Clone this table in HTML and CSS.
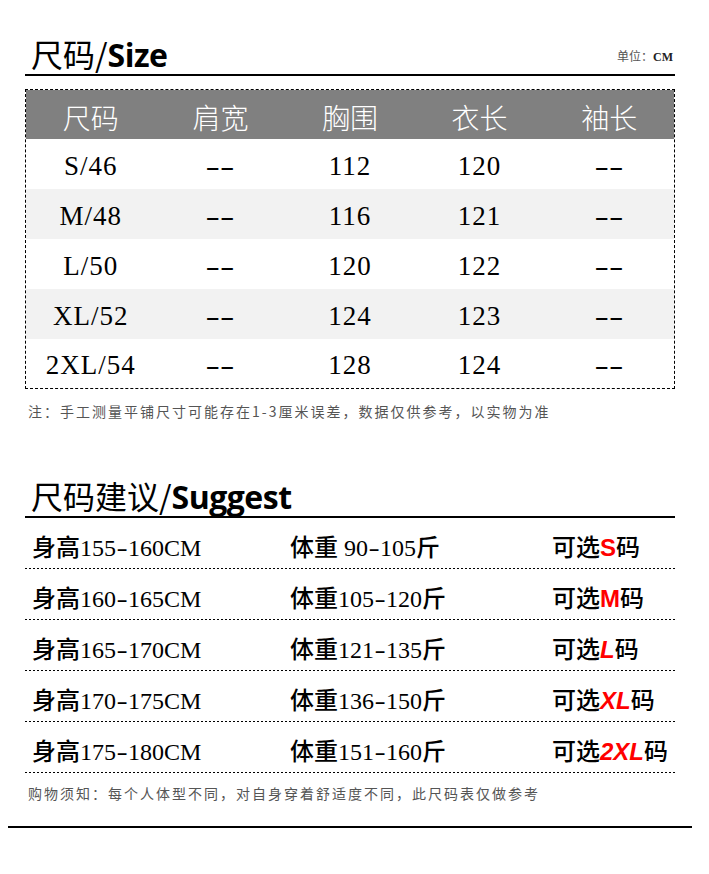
FILE: index.html
```html
<!DOCTYPE html>
<html lang="zh-CN">
<head>
<meta charset="utf-8">
<title>尺码</title>
<link rel="stylesheet" href="styles.css">
</head>
<body>
<div class="page">
  <section class="block">
    <div class="title-row">
      <h1 class="title"><span class="cn">尺码/</span><span class="en">Size</span></h1>
      <div class="unit">单位：<b>CM</b></div>
    </div>
    <div class="size-table">
      <div class="tr head">
        <div>尺码</div><div>肩宽</div><div>胸围</div><div>衣长</div><div>袖长</div>
      </div>
      <div class="tr">
        <div>S/46</div><div><span class="dash">--</span></div><div>112</div><div>120</div><div><span class="dash">--</span></div>
      </div>
      <div class="tr alt">
        <div>M/48</div><div><span class="dash">--</span></div><div>116</div><div>121</div><div><span class="dash">--</span></div>
      </div>
      <div class="tr">
        <div>L/50</div><div><span class="dash">--</span></div><div>120</div><div>122</div><div><span class="dash">--</span></div>
      </div>
      <div class="tr alt">
        <div>XL/52</div><div><span class="dash">--</span></div><div>124</div><div>123</div><div><span class="dash">--</span></div>
      </div>
      <div class="tr last">
        <div>2XL/54</div><div><span class="dash">--</span></div><div>128</div><div>124</div><div><span class="dash">--</span></div>
      </div>
    </div>
    <p class="note note-top">注：手工测量平铺尺寸可能存在1-3厘米误差，数据仅供参考，以实物为准</p>
  </section>

  <section class="block suggest">
    <div class="title-row">
      <h1 class="title"><span class="cn">尺码建议/</span><span class="en">Suggest</span></h1>
    </div>
    <div class="srow"><div>身高155<span class="hy">-</span>160CM</div><div>体重 90<span class="hy">-</span>105斤</div><div>可选<span class="sz">S</span>码</div></div>
    <div class="srow"><div>身高160<span class="hy">-</span>165CM</div><div>体重105<span class="hy">-</span>120斤</div><div>可选<span class="sz">M</span>码</div></div>
    <div class="srow"><div>身高165<span class="hy">-</span>170CM</div><div>体重121<span class="hy">-</span>135斤</div><div>可选<span class="sz it">L</span>码</div></div>
    <div class="srow"><div>身高170<span class="hy">-</span>175CM</div><div>体重136<span class="hy">-</span>150斤</div><div>可选<span class="sz it">XL</span>码</div></div>
    <div class="srow"><div>身高175<span class="hy">-</span>180CM</div><div>体重151<span class="hy">-</span>160斤</div><div>可选<span class="sz it">2XL</span>码</div></div>
    <p class="note note-bottom">购物须知：每个人体型不同，对自身穿着舒适度不同，此尺码表仅做参考</p>
  </section>
  <div class="bottom-rule"></div>
</div>
</body>
</html>
```

FILE: styles.css
```css
* { box-sizing: border-box; }
html, body { margin: 0; padding: 0; background: #fff; }
body { width: 709px; height: 874px; overflow: hidden; font-family: "Noto Sans CJK SC", sans-serif; color: #000; }

.page { padding-top: 36px; }

.block { margin: 0 34px 0 25px; width: 650px; }

.title-row {
  display: flex;
  justify-content: space-between;
  align-items: flex-end;
  border-bottom: 2px solid #000;
  height: 40px;
}
.title {
  margin: 0;
  font-size: 32px;
  line-height: 38px;
  font-weight: 400;
  padding-left: 6px;
  white-space: nowrap;
}
.title .cn { font-family: "Noto Sans CJK SC", sans-serif; font-weight: 400; }
.title .en { font-family: "Open Sans", "Noto Sans", sans-serif; font-weight: 700; letter-spacing: -0.5px; }

.unit {
  font-size: 12px;
  line-height: 14px;
  color: #555;
  margin-bottom: 10px;
  margin-right: 2px;
  font-family: "Noto Sans CJK SC", sans-serif;
}
.unit b { font-family: "Liberation Serif", serif; font-weight: 700; color: #222; }

.size-table {
  margin-top: 13px;
  border: 1px dashed #000;
}
.tr {
  display: grid;
  grid-template-columns: repeat(5, 1fr);
  height: 50px;
  align-items: center;
  text-align: center;
  font-family: "Liberation Serif", serif;
  font-size: 27px;
  letter-spacing: 1px;
  padding-top: 4px;
}
.tr.head {
  height: 49px;
  background: #808080;
  color: #fff;
  font-family: "Noto Sans CJK SC", sans-serif;
  font-weight: 300;
  font-size: 28px;
  letter-spacing: 0;
  padding-top: 5px;
}
.tr.alt { background: #f2f2f2; }
.tr.last { height: 49px; }
.dash {
  display: inline-block;
  letter-spacing: 0;
  transform: scaleX(1.6);
}

.note {
  margin: 0;
  font-size: 14px;
  line-height: 20px;
  letter-spacing: 2px;
  color: #555;
  padding-left: 3px;
  font-family: "Noto Sans CJK SC", sans-serif;
}
.note-top { margin-top: 12px; }

.suggest { margin-top: 57px; }

.srow {
  display: grid;
  grid-template-columns: 258px 262px 1fr;
  padding-left: 7px;
  height: 51px;
  align-items: center;
  padding-top: 4px;
  font-size: 24px;
  font-family: "Liberation Serif", "Noto Sans CJK SC", serif;
  font-weight: 500;
  background: repeating-linear-gradient(to right, #000 0 2px, transparent 2px 4px) left bottom / 100% 1px no-repeat;
}
.srow:first-of-type { height: 50px; }
.srow > div { white-space: nowrap; }
.hy { display: inline-block; transform: scaleX(1.4); margin: 0 2px; }
.sz {
  font-family: "Liberation Sans", "DejaVu Sans", sans-serif;
  font-weight: 900;
  color: #ff0000;
  font-size: 24px;
}
.sz.it { font-style: italic; }

.note-bottom { margin-top: 10px; }

.bottom-rule {
  margin: 23px 17px 0 8px;
  height: 2px;
  background: #000;
}
```
